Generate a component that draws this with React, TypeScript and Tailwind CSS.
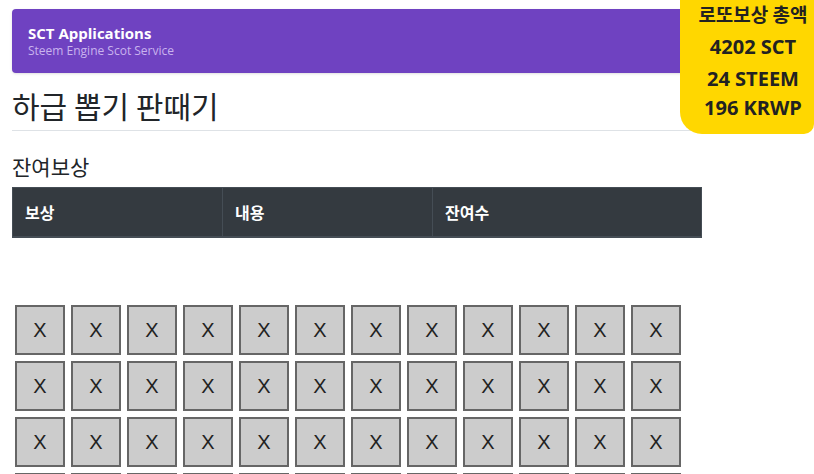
const cells = Array.from({ length: 48 }, (_, i) => i);

function LottoTotal() {
  return (
    <div className="absolute right-0 top-0 w-[134px] h-[134px] rounded-bl-[22px] rounded-br-[10px] bg-[#ffd700] pl-3 text-center text-[#222] font-bold font-['Open_Sans','Noto_Sans_CJK_KR',sans-serif] whitespace-nowrap">
      <div className="text-[19px] leading-[30px] -mt-[1px] font-['Noto_Sans_CJK_KR',sans-serif]">로또보상 총액</div>
      <div className="text-[20px] leading-[35px]">4202 SCT</div>
      <div className="text-[20px] leading-[29px]">24 STEEM</div>
      <div className="text-[20px] leading-[30px]">196 KRWP</div>
    </div>
  );
}

export default function App() {
  return (
    <div className="relative h-[474px] overflow-hidden bg-white font-['Noto_Sans_CJK_KR',sans-serif]">
      <div className="px-3 pt-[9px]">
        <div className="h-16 rounded bg-[#6f42c1] px-4 pt-[14px] shadow-sm font-['Open_Sans',sans-serif]">
          <div className="text-[15px] font-bold leading-5 text-white">SCT Applications</div>
          <div className="text-[12px] leading-4 text-[#c9b3ee]">Steem Engine Scot Service</div>
        </div>

        <h2 className="mt-[13px] pb-[6px] text-[30px] leading-[38px] text-[#212529] border-b border-[#dee2e6]">
          하급 뽑기 판때기
        </h2>

        <h5 className="mt-[21px] mb-[7px] text-[21px] leading-7 text-[#212529]">잔여보상</h5>

        <table className="w-[690px] border-collapse bg-[#343a40] text-white text-[16px] font-bold">
          <thead>
            <tr>
              <th className="w-[210px] h-[49px] border border-[#454d55] border-b-2 px-3 text-left">보상</th>
              <th className="w-[210px] h-[49px] border border-[#454d55] border-b-2 px-3 text-left">내용</th>
              <th className="h-[49px] border border-[#454d55] border-b-2 px-3 text-left">잔여수</th>
            </tr>
          </thead>
        </table>

        <div className="mt-[64px] w-[690px] flex flex-wrap">
          {cells.map((i) => (
            <div
              key={i}
              className="m-[3px] w-[50px] h-[50px] border-2 border-[#666] bg-[#ccc] flex items-center justify-center text-[20px] text-[#222] font-['Liberation_Sans',sans-serif]"
            >
              X
            </div>
          ))}
        </div>
      </div>

      <LottoTotal />
    </div>
  );
}
